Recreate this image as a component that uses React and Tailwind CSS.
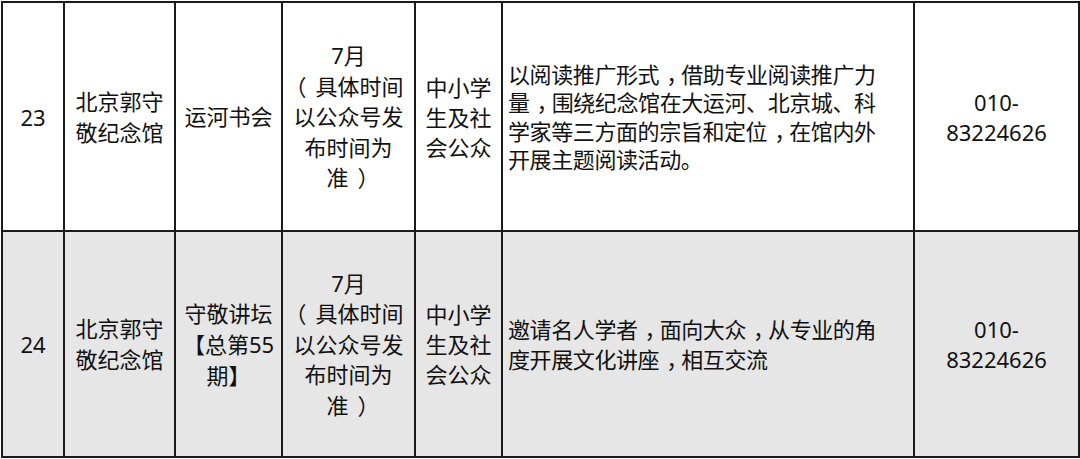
import React from 'react';

const rows = [
  {
    no: '23',
    venue: ['北京郭守', '敬纪念馆'],
    name: ['运河书会'],
    time: ['7月', '（具体时间', '以公众号发', '布时间为', '准）'],
    audience: ['中小学', '生及社', '会公众'],
    desc: [
      '以阅读推广形式，借助专业阅读推广力',
      '量，围绕纪念馆在大运河、北京城、科',
      '学家等三方面的宗旨和定位，在馆内外',
      '开展主题阅读活动。',
    ],
    phone: ['010-', '83224626'],
    bg: 'bg-white',
    h: 'h-[229px]',
    descLead: 'leading-[28.5px]',
  },
  {
    no: '24',
    venue: ['北京郭守', '敬纪念馆'],
    name: ['守敬讲坛', '【总第55', '期】'],
    time: ['7月', '（具体时间', '以公众号发', '布时间为', '准）'],
    audience: ['中小学', '生及社', '会公众'],
    desc: ['邀请名人学者，面向大众，从专业的角', '度开展文化讲座，相互交流'],
    phone: ['010-', '83224626'],
    bg: 'bg-[#e6e6e6]',
    h: 'h-[226px]',
    descLead: 'leading-[30px]',
  },
];

// the original font sets these full-width marks more centred than Noto CJK SC does
const punct = {
  '，': 'ml-[7px] tracking-[-7px]',
  '（': '-ml-[9px] mr-[9px]',
  '）': 'ml-[9px] -mr-[9px]',
};

const Text = ({ s }) =>
  s.split(/([，（）])/).map((part, i) =>
    punct[part] ? (
      <span key={i} className={punct[part]}>
        {part}
      </span>
    ) : (
      part
    )
  );

const Lines = ({ lines }) =>
  lines.map((l, i) => (
    <React.Fragment key={i}>
      {i > 0 && <br />}
      <Text s={l} />
    </React.Fragment>
  ));

const cell = 'border-2 border-[#1a1a1a] align-middle p-0';

export default function App() {
  return (
    <div className="w-[1080px] h-[459px] bg-white pt-[1px] pl-[1px] overflow-hidden">
      <table
        className="table-fixed border-collapse w-[1077px] text-[22px] text-[#111] text-center"
        style={{ fontFamily: '"Noto Sans", "Noto Sans CJK SC", sans-serif' }}
      >
        <colgroup>
          <col className="w-[62px]" />
          <col className="w-[111px]" />
          <col className="w-[107px]" />
          <col className="w-[133px]" />
          <col className="w-[87px]" />
          <col className="w-[412px]" />
          <col className="w-[165px]" />
        </colgroup>
        <tbody>
          {rows.map((r) => (
            <tr key={r.no} className={`${r.bg} ${r.h}`}>
              <td className={`${cell} leading-[30px]`}>{r.no}</td>
              <td className={`${cell} leading-[31px]`}>
                <Lines lines={r.venue} />
              </td>
              <td className={`${cell} leading-[31px] whitespace-nowrap`}>
                <Lines lines={r.name} />
              </td>
              <td className={`${cell} leading-[30.5px] whitespace-nowrap`}>
                <Lines lines={r.time} />
              </td>
              <td className={`${cell} leading-[30px] whitespace-nowrap`}>
                <Lines lines={r.audience} />
              </td>
              <td className={`${cell} ${r.descLead} text-left pl-[5px] whitespace-nowrap tracking-[-0.4px]`}>
                <Lines lines={r.desc} />
              </td>
              <td className={`${cell} leading-[30px]`}>
                <Lines lines={r.phone} />
              </td>
            </tr>
          ))}
        </tbody>
      </table>
    </div>
  );
}
